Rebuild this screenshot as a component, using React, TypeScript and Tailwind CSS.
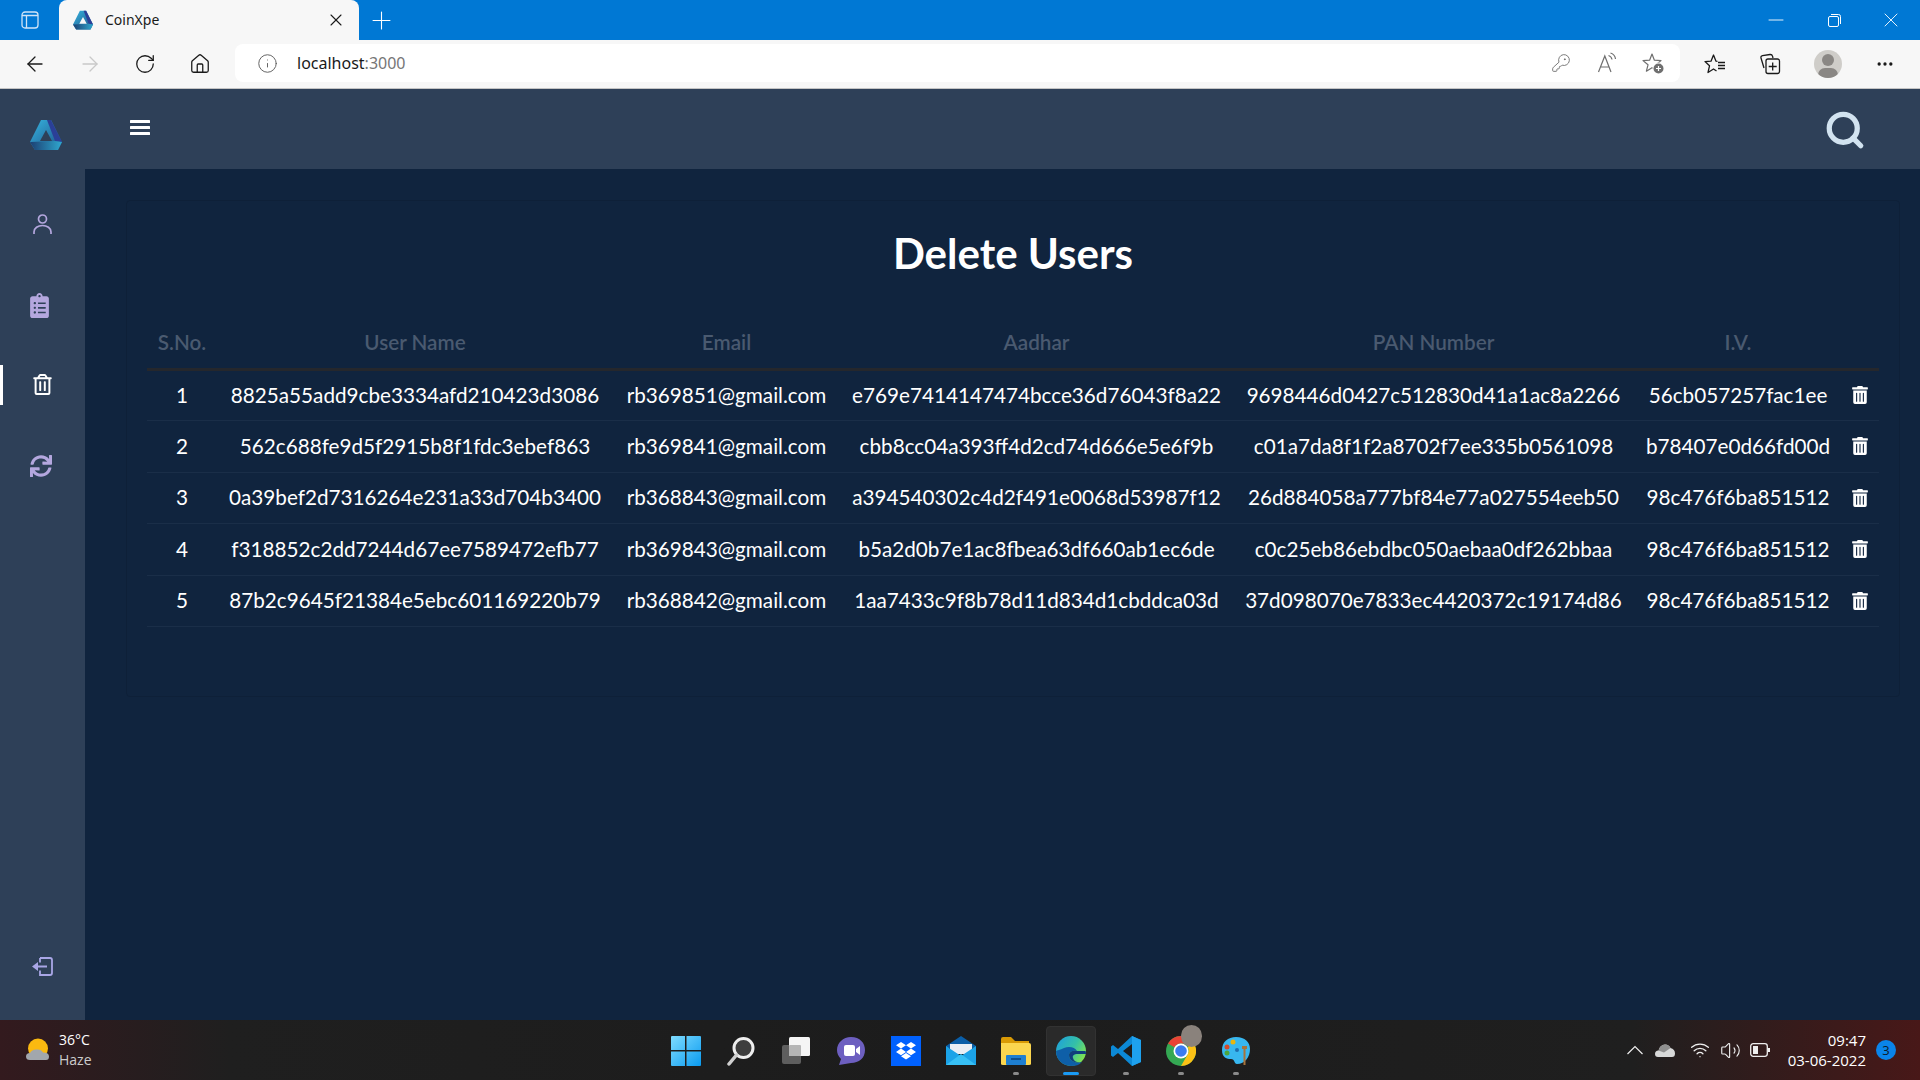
import React from "react";
import { ArrowLeft, ArrowRight, RotateCw, Home, Info, KeyRound, Plus, X, Minus, MoreHorizontal, Search, Wifi, Volume2 } from "lucide-react";
import { FaClipboardList, FaSync, FaRegTrashAlt, FaTrashAlt } from "react-icons/fa";

const rows = [
  ["1", "8825a55add9cbe3334afd210423d3086", "rb369851@gmail.com", "e769e7414147474bcce36d76043f8a22", "9698446d0427c512830d41a1ac8a2266", "56cb057257fac1ee"],
  ["2", "562c688fe9d5f2915b8f1fdc3ebef863", "rb369841@gmail.com", "cbb8cc04a393ff4d2cd74d666e5e6f9b", "c01a7da8f1f2a8702f7ee335b0561098", "b78407e0d66fd00d"],
  ["3", "0a39bef2d7316264e231a33d704b3400", "rb368843@gmail.com", "a394540302c4d2f491e0068d53987f12", "26d884058a777bf84e77a027554eeb50", "98c476f6ba851512"],
  ["4", "f318852c2dd7244d67ee7589472efb77", "rb369843@gmail.com", "b5a2d0b7e1ac8fbea63df660ab1ec6de", "c0c25eb86ebdbc050aebaa0df262bbaa", "98c476f6ba851512"],
  ["5", "87b2c9645f21384e5ebc601169220b79", "rb368842@gmail.com", "1aa7433c9f8b78d11d834d1cbddca03d", "37d098070e7833ec4420372c19174d86", "98c476f6ba851512"],
];

function Logo({ size, hole, id }: { size: number; hole: string; id: string }) {
  return (
    <svg width={size} height={size} viewBox="0 0 32 32">
      <defs>
        <linearGradient id={`${id}a`} x1="0" y1="0" x2="1" y2="1">
          <stop offset="0" stopColor="#36b5e0" />
          <stop offset="1" stopColor="#1d4f86" />
        </linearGradient>
        <linearGradient id={`${id}b`} x1="0" y1="0" x2="1" y2="0">
          <stop offset="0" stopColor="#1c3f72" />
          <stop offset="1" stopColor="#2fa8cf" />
        </linearGradient>
      </defs>
      <path d="M11 1 L21 1 L32 23 L28 31 L5 31 L0 23 Z" fill={`url(#${id}a)`} />
      <path d="M17 1 L21 1 L32 23 L25 22 Z" fill="#2b3f97" />
      <path d="M0 23 L25 22 L32 23 L28 31 L5 31 Z" fill={`url(#${id}b)`} />
      <path d="M16 11 L22 22 L10 22 Z" fill={hole} />
    </svg>
  );
}

function StarPlus() {
  return (
    <svg width="22" height="22" viewBox="0 0 22 22" fill="none" stroke="#6f6f6f" strokeWidth="1.2">
      <path d="M10 2 L12.400 8.200 L19 8.600 L14 12.800 L15.600 19.200 L10 15.700 L4.400 19.200 L6 12.800 L1 8.600 L7.600 8.200 Z" strokeLinejoin="round" />
      <circle cx="16.500" cy="16.500" r="6" fill="#ffffff" stroke="none" />
      <circle cx="16.500" cy="16.500" r="5" fill="#6f6f6f" stroke="none" />
      <path d="M16.500 14 V19 M14 16.500 H19" stroke="#fff" />
    </svg>
  );
}

function Favorites() {
  return (
    <svg width="22" height="22" viewBox="0 0 22 22" fill="none" stroke="#1a1a1a" strokeWidth="1.300" strokeLinejoin="round">
      <path d="M13.500 8.400 L12 8.200 L9.500 2 L7 8.200 L1 8.600 L5.500 12.800 L4 19.500 L9.500 16 L12.500 18" />
      <path d="M14 9.500 H21 M14 12.500 H21 M14 15.500 H21" />
    </svg>
  );
}

function Collections() {
  return (
    <svg width="22" height="22" viewBox="0 0 22 22" fill="none" stroke="#1a1a1a" strokeWidth="1.300">
      <path d="M5 15 L2 5 Q1.600 3 3.500 2.600 L11 1.500 Q13 1.300 13.600 3.400 L14 5" />
      <rect x="7" y="6" width="13.500" height="14.500" rx="2" />
      <path d="M13.700 9.500 V17.500 M9.700 13.500 H17.700" />
    </svg>
  );
}

function ReadAloud() {
  return (
    <svg width="22" height="22" viewBox="0 0 22 22" fill="none" stroke="#6f6f6f" strokeWidth="1.200">
      <path d="M1.500 20 L7.800 4 L14 20 M3.800 15 H12" />
      <path d="M11.500 3.500 Q14.500 4.500 15 7.500 M13.500 1 Q18 2.500 18.500 7" />
    </svg>
  );
}

function TabIcon() {
  return (
    <svg width="18" height="18" viewBox="0 0 18 18" fill="none" stroke="#cfe4f7" strokeWidth="1.300">
      <rect x="1" y="1" width="16" height="16" rx="3" />
      <path d="M1 4.500 H17 M5.500 4.500 V17" />
    </svg>
  );
}

function Restore() {
  return (
    <svg width="13" height="13" viewBox="0 0 13 13" fill="none" stroke="#fff" strokeWidth="1">
      <rect x=".5" y="2.500" width="10" height="10" rx="1.500" />
      <path d="M3 .5 H10.500 Q12.500 .5 12.500 2.500 V10" />
    </svg>
  );
}

function WinLogo() {
  return (
    <svg width="30" height="30" viewBox="0 0 30 30">
      <defs>
        <linearGradient id="w1" x1="0" y1="0" x2="1" y2="1">
          <stop offset="0" stopColor="#7fdcff" />
          <stop offset="1" stopColor="#0a9bf0" />
        </linearGradient>
      </defs>
      <path d="M0 1 Q0 0 1 0 H14 V14 H0 Z M15.500 0 H29 Q30 0 30 1 V14 H15.500 Z M0 15.500 H14 V30 H1 Q0 30 0 29 Z M15.500 15.500 H30 V29 Q30 30 29 30 H15.500 Z" fill="url(#w1)" />
    </svg>
  );
}

function SearchTask() {
  return (
    <svg width="30" height="30" viewBox="0 0 30 30" fill="none">
      <circle cx="17.500" cy="12" r="9.500" fill="#3d3d3d" stroke="#eeeeee" strokeWidth="3" />
      <path d="M10.500 19 L3 28" stroke="#cfcfcf" strokeWidth="3.500" strokeLinecap="round" />
    </svg>
  );
}

function TaskView() {
  return (
    <svg width="30" height="30" viewBox="0 0 30 30">
      <rect x="1" y="9" width="19" height="19" rx="2" fill="#5e5e5e" />
      <rect x="8" y="1" width="21" height="19" rx="1.500" fill="#f5f5f5" />
      <rect x="8" y="9" width="12" height="11" rx="1" fill="#b5b5b5" />
    </svg>
  );
}

function Chat() {
  return (
    <svg width="30" height="30" viewBox="0 0 30 30">
      <path d="M15 1 C24 1 29 7 29 14 C29 22 23 27 15 27 L3 29 L5 23 C2 20 1 17 1 14 C1 7 7 1 15 1 Z" fill="#6d5fc0" />
      <rect x="8" y="9" width="11" height="11" rx="2" fill="#fff" />
      <path d="M20 13 L24 10 V19 L20 16 Z" fill="#fff" />
    </svg>
  );
}

function Dropbox() {
  return (
    <svg width="30" height="30" viewBox="0 0 30 30">
      <rect width="30" height="30" fill="#0061fe" />
      <path d="M10 6 L15 9.300 L10 12.600 L5 9.300 Z M20 6 L25 9.300 L20 12.600 L15 9.300 Z M10 12.600 L15 15.900 L10 19.200 L5 15.900 Z M20 12.600 L25 15.900 L20 19.200 L15 15.900 Z M15 17 L20 20.300 L15 23.600 L10 20.300 Z" fill="#fff" />
    </svg>
  );
}

function Mail() {
  return (
    <svg width="30" height="30" viewBox="0 0 30 30">
      <path d="M0 10 L15 0 L30 10 V12 H0 Z" fill="#0a5ea8" />
      <path d="M4 8 H26 V18 H4 Z" fill="#e8eef5" />
      <path d="M0 10 L15 20 L30 10 V29 H0 Z" fill="#1ba3e8" />
      <path d="M0 29 L15 18 L30 29 Z" fill="#37c0f5" />
    </svg>
  );
}

function Folder() {
  return (
    <svg width="30" height="30" viewBox="0 0 30 30">
      <path d="M0 3 Q0 1 2 1 H10 L14 5 H28 V10 H0 Z" fill="#d99a05" />
      <path d="M0 7 H28 Q30 7 30 9 V28 Q30 29 28 29 H2 Q0 29 0 28 Z" fill="#fbd64f" />
      <rect x="5" y="19" width="20" height="10" rx="1" fill="#1e7fd1" />
      <rect x="10" y="22" width="10" height="2" fill="#0c4f8f" />
    </svg>
  );
}

function Edge() {
  return (
    <svg width="30" height="30" viewBox="0 0 30 30">
      <defs>
        <linearGradient id="e1" x1="0" y1="0" x2="1" y2="0.600">
          <stop offset="0" stopColor="#1b9de2" />
          <stop offset="0.600" stopColor="#35c1a6" />
          <stop offset="1" stopColor="#7ee352" />
        </linearGradient>
      </defs>
      <circle cx="15" cy="15" r="15" fill="url(#e1)" />
      <path d="M0 15 C0 26 10 30 15 30 C20 30 23 29 26 26 C20 28 13 25 13 19 C13 15 18 14 21 15 C19 11 13 10 8 12 C4 14 1 14 0 15 Z" fill="#0e5fa8" />
      <path d="M13 19 C13 25 20 28 26 26 C22 27 18 26 17 22 C16 19 19 18 21 18 H30 C30 17 30 16 29.500 15 L21 15 C18 14 13 15 13 19 Z" fill="#103e7c" />
    </svg>
  );
}

function VSCode() {
  return (
    <svg width="30" height="30" viewBox="0 0 30 30">
      <path d="M21 0 L30 4 V26 L21 30 L7 17 L2 21 L0 19.500 V10.500 L2 9 L7 13 Z M21 8 L12 15 L21 22 Z" fill="#0c89d6" />
      <path d="M21 0 L30 4 V26 L21 30 Z" fill="#1ea1ee" />
    </svg>
  );
}

function Chrome() {
  return (
    <svg width="30" height="30" viewBox="0 0 30 30">
      <circle cx="15" cy="15" r="15" fill="#34a853" />
      <path d="M15 0 A15 15 0 0 1 28 7.500 L15 7.500 A7.500 7.500 0 0 0 8.500 11.200 L2 7.500 A15 15 0 0 1 15 0 Z" fill="#ea4335" />
      <path d="M28 7.500 A15 15 0 0 1 15 30 L21.500 18.700 A7.500 7.500 0 0 0 21.500 11 Z" fill="#fbc116" />
      <circle cx="15" cy="15" r="7.500" fill="#fff" />
      <circle cx="15" cy="15" r="5.800" fill="#3b7cf0" />
    </svg>
  );
}

function Paint() {
  return (
    <svg width="30" height="30" viewBox="0 0 30 30">
      <path d="M15 1 C24 1 29 6 29 13 C29 21 24 28 16 28 C13 28 14 23 10 23 C6 23 1 22 1 14 C1 6 7 1 15 1 Z" fill="#38b7f0" />
      <circle cx="12" cy="6" r="2.500" fill="#e8b60e" />
      <circle cx="6" cy="11" r="2.500" fill="#d14b2c" />
      <circle cx="6" cy="17" r="2.500" fill="#4ca63d" />
      <path d="M21 10 H26 V13 H24.500 V29 H22.500 V13 H21 Z" fill="#a8743c" />
      <circle cx="16" cy="14" r="2" fill="#1f6fb0" />
    </svg>
  );
}

function OneDrive() {
  return (
    <svg width="20" height="14" viewBox="0 0 20 14">
      <path d="M3 14 Q0 14 0 11 Q0 7.500 3.500 7.500 Q5 2 10 1.500 Q14 1.500 15.500 5 Q20 6 20 10.500 Q20 14 17 14 Z" fill="#d8d8d8" />
      <path d="M3.500 7.500 Q5 2 10 1.500 Q14 1.500 15.500 5 L9 9.500 Z" fill="#8f8f8f" />
    </svg>
  );
}

function SideUser() {
  return (
    <svg width="19" height="20" viewBox="0 0 19 20" fill="none" stroke="#b4a7de" strokeWidth="1.700">
      <circle cx="9.500" cy="5" r="4" />
      <path d="M1 20 V18 C1 14 5 11.500 9.500 11.500 C14 11.500 18 14 18 18 V20" />
    </svg>
  );
}

function SideLogout() {
  return (
    <svg width="21" height="19" viewBox="0 0 21 19" fill="none">
      <path d="M8 1 H18 Q20 1 20 3 V16 Q20 18 18 18 H8 V13.500 M8 5.500 V1" stroke="#a9a6e6" strokeWidth="1.800" />
      <path d="M15 9.500 H5" stroke="#a9a6e6" strokeWidth="2" />
      <path d="M0 9.500 L6 5 V14 Z" fill="#a9a6e6" />
    </svg>
  );
}

function Hamburger() {
  return (
    <svg width="20" height="15" viewBox="0 0 20 15" fill="#ffffff">
      <rect width="20" height="3" rx=".5" />
      <rect y="6" width="20" height="3" rx=".5" />
      <rect y="12" width="20" height="3" rx=".5" />
    </svg>
  );
}

function Battery() {
  return (
    <svg width="20" height="14" viewBox="0 0 20 14" fill="none">
      <rect x=".7" y=".7" width="16.600" height="12.600" rx="2.500" stroke="#eeeeee" strokeWidth="1.300" />
      <rect x="3" y="3" width="5" height="8" fill="#eeeeee" />
      <rect x="18" y="5" width="2" height="4" fill="#eeeeee" />
    </svg>
  );
}

function TaskItem({ children, dot, active }: { children: React.ReactNode; dot?: boolean; active?: boolean }) {
  return (
    <div className="relative w-[40px] h-[50px] flex items-center justify-center">
      {active && <div className="absolute w-[50px] h-[50px] -left-[5px] top-0 rounded bg-[#2a2a2a] border border-[#323232]" />}
      <div className="relative flex">{children}</div>
      {dot && <div className="absolute bottom-[1px] w-[6px] h-[3px] rounded-full bg-[#8a8a8a]" />}
      {active && <div className="absolute bottom-[1px] w-[16px] h-[3px] rounded-full bg-[#1a9bf5]" />}
    </div>
  );
}

export default function App() {
  const appFont = { fontFamily: "Lato, 'Noto Sans', sans-serif" };
  const uiFont = { fontFamily: "'Open Sans', 'Noto Sans', sans-serif" };
  return (
    <div className="w-[1920px] h-[1080px] overflow-hidden flex flex-col bg-[#10243e]" style={uiFont}>
      {/* Tab strip */}
      <div className="h-[40px] bg-[#0078d4] flex items-start shrink-0">
        <div className="w-[48px] h-[40px] flex items-center justify-center pl-[12px]"><TabIcon /></div>
        <div className="ml-[11px] w-[300px] h-[40px] rounded-t-lg bg-[#f7f7f7] flex items-center pl-[14px] pr-[13px]">
          <Logo size={20} hole="#f7f7f7" id="t" />
          <span className="ml-[12px] -mt-[2px] text-[14px] text-[#1a1a1a] flex-1" style={{ fontFamily: "'Noto Sans', sans-serif" }}>CoinXpe</span>
          <X size={20} strokeWidth={1.300} color="#1a1a1a" />
        </div>
        <div className="ml-[8px] h-[40px] flex items-center"><Plus size={29} strokeWidth={0.900} color="#fff" /></div>
        <div className="flex-1" />
        <div className="h-[40px] flex items-center">
          <div className="w-[57px] flex justify-center pr-[4px]"><Minus size={24} strokeWidth={0.900} color="#fff" /></div>
          <div className="w-[57px] flex justify-center"><Restore /></div>
          <div className="w-[57px] flex justify-center pr-[2px]"><X size={24} strokeWidth={0.900} color="#fff" /></div>
        </div>
      </div>
      {/* Toolbar */}
      <div className="h-[49px] bg-[#f7f7f7] border-b border-[#c4c4c4] flex items-center shrink-0">
        <div className="w-[235px] flex items-center pl-[23px]">
          <ArrowLeft size={24} strokeWidth={1.300} color="#1a1a1a" />
          <div className="ml-[31px]"><ArrowRight size={24} strokeWidth={1.300} color="#c9c9c9" /></div>
          <div className="ml-[32px]"><RotateCw size={22} strokeWidth={1.400} color="#1a1a1a" /></div>
          <div className="ml-[33px]"><Home size={22} strokeWidth={1.400} color="#1a1a1a" /></div>
        </div>
        <div className="w-[1445px] h-[38px] -mt-[2px] bg-white rounded-lg flex items-center pl-[22px] pr-[16px]">
          <Info size={21} strokeWidth={1.100} color="#5f5f5f" />
          <span className="ml-[19px] text-[16px] text-[#1a1a1a] flex-1" style={{ fontFamily: "'Noto Sans', sans-serif" }}>localhost<span className="text-[#767676]">:3000</span></span>
          <div className="flex items-center gap-[23px]">
            <div className="-translate-x-[3px]"><KeyRound size={20} strokeWidth={1.100} color="#6f6f6f" /></div>
            <ReadAloud />
            <StarPlus />
          </div>
        </div>
        <div className="flex-1 flex items-center pl-[24px]">
          <Favorites />
          <div className="ml-[33px]"><Collections /></div>
          <div className="ml-[33px] w-[28px] h-[28px] rounded-full bg-[#cfcdc9] overflow-hidden relative">
            <div className="absolute left-[8px] top-[4px] w-[12px] h-[12px] rounded-full bg-[#8a8784]" />
            <div className="absolute left-[4px] top-[18px] w-[20px] h-[14px] rounded-full bg-[#8a8784]" />
          </div>
          <div className="ml-[33px]"><MoreHorizontal size={20} strokeWidth={2} color="#1a1a1a" /></div>
        </div>
      </div>

      {/* App */}
      <div className="flex-1 flex min-h-0" style={appFont}>
        <aside className="w-[85px] bg-[#2e4058] flex flex-col shrink-0">
          <div className="h-[125px] pl-[30px] pt-[30px] shrink-0"><Logo size={32} hole="#2e4058" id="s" /></div>
          <div className="h-[79px] pl-[33px] shrink-0"><SideUser /></div>
          <div className="h-[81px] pl-[27px] shrink-0"><FaClipboardList size={25} color="#b4a7de" /></div>
          <div className="h-[81px] pl-[32px] shrink-0 relative">
            <div className="absolute left-0 -top-[9px] w-[3px] h-[40px] bg-white" />
            <FaRegTrashAlt size={21} color="#ffffff" />
          </div>
          <div className="pl-[30px] shrink-0"><FaSync size={22} color="#b4a7de" /></div>
          <div className="flex-1" />
          <div className="h-[63px] pl-[32px] shrink-0"><SideLogout /></div>
        </aside>
        <div className="flex-1 flex flex-col min-w-0">
          <header className="h-[80px] bg-[#2e4058] flex items-center pl-[45px] pr-[54px] shrink-0">
            <div className="-mt-[3px] flex"><Hamburger /></div>
            <div className="flex-1" />
            <Search size={42} strokeWidth={3} color="#d2e3f0" className="mt-[2px]" />
          </header>
          <main className="flex-1 pt-[31px] pl-[41px] pr-[20px] min-h-0">
            <div className="h-[497px] border border-[#0e2038] rounded px-[20px]">
              <h1 className="mt-[30px] h-[44px] leading-[44px] text-center text-[42px] font-bold text-white">Delete Users</h1>
              <table className="mt-[43px] w-[1732px] table-fixed border-collapse text-[20.7px]">
                <colgroup>
                  <col className="w-[70px]" />
                  <col className="w-[396px]" />
                  <col className="w-[227px]" />
                  <col className="w-[393px]" />
                  <col className="w-[401px]" />
                  <col className="w-[208px]" />
                  <col className="w-[37px]" />
                </colgroup>
                <thead>
                  <tr className="h-[51px] border-b-[3px] border-[#25272c] text-[#4a5a70]">
                    {["S.No.", "User Name", "Email", "Aadhar", "PAN Number", "I.V.", ""].map((h, i) => (
                      <th key={i} className="font-semibold text-center align-middle pb-[1px]">{h}</th>
                    ))}
                  </tr>
                </thead>
                <tbody>
                  {rows.map((r) => (
                    <tr key={r[0]} className="h-[51.5px] border-b border-[#1a2e48] text-white">
                      {r.map((c, i) => (
                        <td key={i} className="text-center align-middle whitespace-nowrap">{c}</td>
                      ))}
                      <td className="align-middle">
                        <div className="flex justify-center pr-[2px]"><FaTrashAlt size={18} color="#ffffff" /></div>
                      </td>
                    </tr>
                  ))}
                </tbody>
              </table>
            </div>
          </main>
        </div>
      </div>

      {/* Taskbar */}
      <div className="h-[60px] shrink-0 flex items-center bg-[linear-gradient(90deg,#331a1e_0%,#1f1f1f_12%,#1c1c1c_50%,#1f1f1f_85%,#481818_100%)]">
        <div className="w-[666px] flex items-center pl-[26px] shrink-0">
          <svg width="24" height="24" viewBox="0 0 24 24">
            <circle cx="12" cy="10.500" r="10" fill="#fbb910" />
            <path d="M4 22 Q0 22 0 18.500 Q0 15 4 15 Q6 11 11 11.500 Q15 11 17 14.500 Q23 14.500 23 18.500 Q23 22 20 22 Z" fill="#a2a7ad" />
          </svg>
          <div className="ml-[9px] text-[14px] leading-[20px]">
            <div className="text-white">36°C</div>
            <div className="text-[#cccccc]">Haze</div>
          </div>
        </div>
        <div className="flex items-center gap-[15px] pt-[1px] shrink-0">
          <TaskItem><WinLogo /></TaskItem>
          <TaskItem><SearchTask /></TaskItem>
          <TaskItem><TaskView /></TaskItem>
          <TaskItem><Chat /></TaskItem>
          <TaskItem><Dropbox /></TaskItem>
          <TaskItem><Mail /></TaskItem>
          <TaskItem dot><Folder /></TaskItem>
          <TaskItem active><Edge /></TaskItem>
          <TaskItem dot><VSCode /></TaskItem>
          <TaskItem dot>
            <Chrome />
            <div className="absolute -top-[11px] -right-[6px] w-[21px] h-[22px] rounded-full bg-[#8a827c]" />
          </TaskItem>
          <TaskItem dot><Paint /></TaskItem>
        </div>
        <div className="flex-1 flex items-center pl-[371px]">
          <svg width="16" height="10" viewBox="0 0 16 10" fill="none" stroke="#eeeeee" strokeWidth="1.200"><path d="M.5 9 L8 1.500 L15.500 9" /></svg>
          <div className="ml-[12px] flex"><OneDrive /></div>
          <div className="ml-[15px]"><Wifi size={20} strokeWidth={1.600} color="#eeeeee" /></div>
          <div className="ml-[10px]"><Volume2 size={21} strokeWidth={1.300} color="#eeeeee" /></div>
          <div className="ml-[9px] flex"><Battery /></div>
          <div className="ml-[12px] w-[84px] text-right text-[15px] leading-[20px] text-white">
            <div>09:47</div>
            <div className="whitespace-nowrap">03-06-2022</div>
          </div>
          <div className="ml-[10px] w-[20px] h-[20px] rounded-full bg-[#0a84ea] text-[13px] leading-[20px] text-center text-[#0c1a28]">3</div>
        </div>
      </div>
    </div>
  );
}
